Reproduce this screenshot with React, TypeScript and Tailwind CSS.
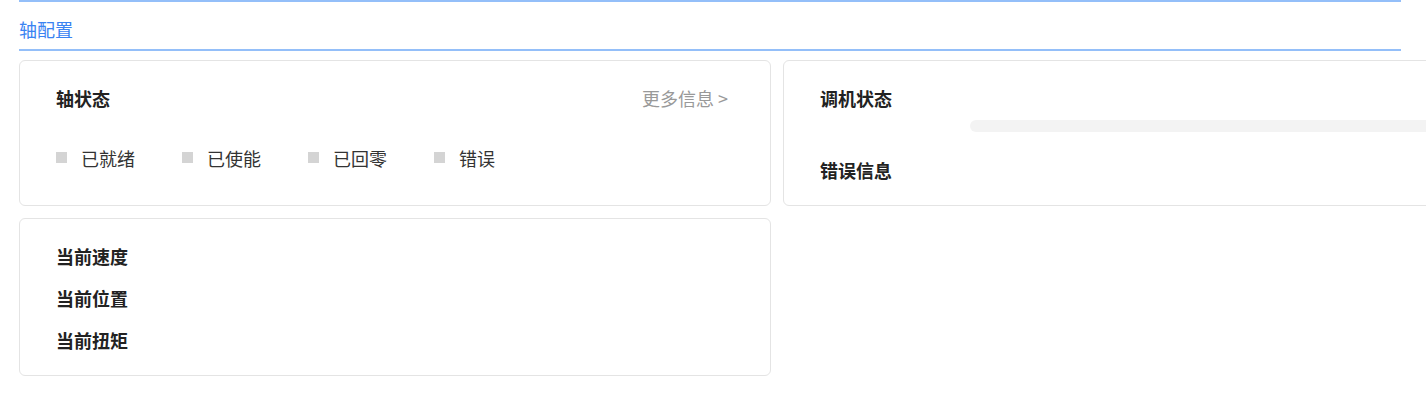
const FONT = "font-['Noto_Sans_CJK_SC','Noto_Sans',sans-serif]";

const STATES = ["已就绪", "已使能", "已回零", "错误"];
const METRICS = ["当前速度", "当前位置", "当前扭矩"];

function Card({ children, className = "" }: { children: React.ReactNode; className?: string }) {
  return (
    <div className={"rounded-[6px] border border-[#e4e4e4] bg-white " + className}>{children}</div>
  );
}

export default function App() {
  return (
    <div className={"h-[403px] w-[1426px] overflow-hidden bg-white " + FONT}>
      {/* 标题栏 */}
      <div className="pl-[19px] pr-[25px]">
        <div className="h-[51px] border-y-2 border-[#94bff9] pt-[15px]">
          <span className="block text-[18px] leading-[24px] text-[#3a83f2]">轴配置</span>
        </div>
      </div>

      <div className="mt-[9px] grid w-max grid-cols-[752px_760px] gap-x-[12px] gap-y-[12px] pl-[19px]">
        {/* 轴状态 */}
        <Card className="h-[146px] pl-[36px] pr-[42px] pt-[25px]">
          <div className="flex h-[24px] items-center justify-between">
            <span className="text-[18px] font-bold text-[#222]">轴状态</span>
            <span className="text-[18px] text-[#999]">更多信息 &gt;</span>
          </div>
          <div className="mt-[36px] flex h-[24px] items-center">
            {STATES.map((s) => (
              <div key={s} className="flex w-[126px] items-center">
                <span className="mb-[2px] h-[11px] w-[11px] bg-[#d4d4d4]" />
                <span className="ml-[14px] text-[18px] text-[#333]">{s}</span>
              </div>
            ))}
          </div>
        </Card>

        {/* 调机状态 */}
        <Card className="h-[146px] pl-[36px] pt-[25px]">
          <div className="flex h-[24px] items-center">
            <span className="text-[18px] font-bold text-[#222]">调机状态</span>
          </div>
          <div className="ml-[150px] mt-[10px] h-[12px] rounded-full bg-[#f3f3f3]" />
          <div className="mt-[26px] flex h-[24px] items-center">
            <span className="text-[18px] font-bold text-[#222]">错误信息</span>
          </div>
        </Card>

        {/* 当前数据 */}
        <Card className="h-[158px] pl-[36px] pt-[16px]">
          {METRICS.map((m) => (
            <div key={m} className="flex h-[42px] items-center">
              <span className="text-[18px] font-bold text-[#222]">{m}</span>
            </div>
          ))}
        </Card>
      </div>
    </div>
  );
}
